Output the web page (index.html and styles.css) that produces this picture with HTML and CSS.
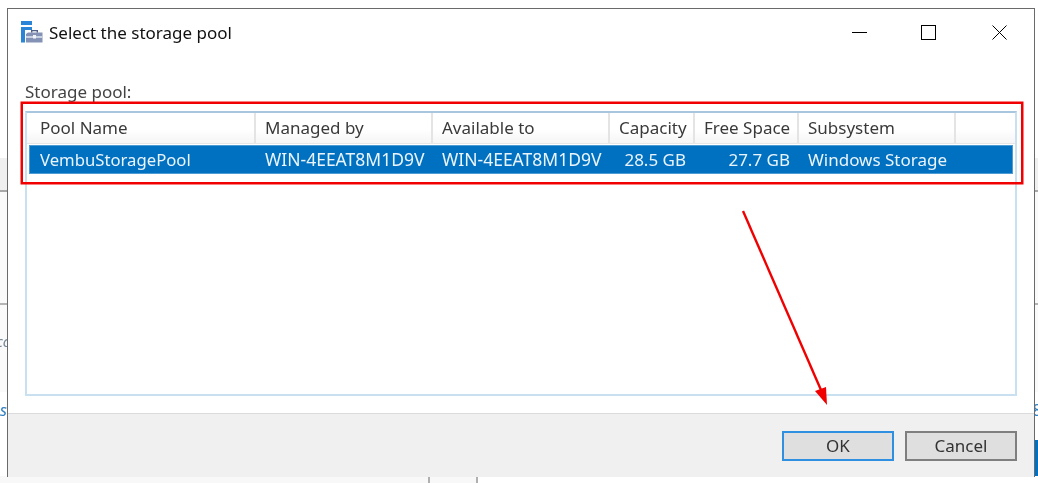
FILE: index.html
```html
<!DOCTYPE html>
<html lang="en">
<head>
<meta charset="utf-8">
<title>Select the storage pool</title>
<link rel="stylesheet" href="styles.css">
</head>
<body>
<div class="desktop">
  <div class="backdrop">
    <div class="bd-top"></div>
    <div class="bd-band"></div>
    <div class="bd-panel"></div>
    <div class="bd-panel bd-tall"><span class="bd-text">cc</span></div>
    <div class="bd-links"><span class="bd-link bd-link-left">s</span><span class="bd-link">8</span></div>
    <div class="bd-fill"><span class="bd-blue"></span></div>
    <div class="bd-foot"><span class="bd-cell bd-cell-a"></span><span class="bd-cell bd-cell-b"></span></div>
  </div>

  <section class="dialog">
    <header class="titlebar">
      <svg class="app-icon" width="22" height="22" viewBox="0 0 22 22" aria-hidden="true">
        <rect x="0" y="0" width="11" height="4" fill="#2b85d6"/>
        <rect x="0" y="6" width="4" height="15.500" fill="#2b85d6"/>
        <rect x="4" y="6" width="7" height="3" fill="#2b85d6"/>
        <path d="M7 11.500h14.500v10H5v-8.500z" fill="#8493b5"/>
        <rect x="5" y="15" width="16.500" height="2" fill="#c9d2e2"/>
        <path d="M10 11.500V9h7v2.500h-1.400v-1.200h-4.200v1.200z" fill="#4f5f85"/>
        <rect x="12" y="14" width="3" height="3.500" fill="#f0f3f8"/>
      </svg>
      <h1 class="title">Select the storage pool</h1>
      <div class="controls">
        <svg class="ctl" width="15" height="15" viewBox="0 0 15 15" aria-hidden="true"><path d="M0 7.500h15" stroke="#000" fill="none"/></svg>
        <svg class="ctl" width="15" height="15" viewBox="0 0 15 15" aria-hidden="true"><rect x=".5" y=".5" width="14" height="14" stroke="#000" fill="none"/></svg>
        <svg class="ctl ctl-close" width="15" height="15" viewBox="0 0 15 15" aria-hidden="true"><path d="M.5.500l14 14M14.500.500l-14 14" stroke="#000" fill="none"/></svg>
      </div>
    </header>

    <main class="content">
      <div class="label">Storage pool:</div>
      <div class="list">
        <div class="list-head">
          <div class="hcell first">Pool Name</div>
          <div class="hcell">Managed by</div>
          <div class="hcell">Available to</div>
          <div class="hcell">Capacity</div>
          <div class="hcell">Free Space</div>
          <div class="hcell">Subsystem</div>
          <div class="hcell"></div>
        </div>
        <div class="list-row">
          <div class="rcell first">VembuStoragePool</div>
          <div class="rcell host">WIN-4EEAT8M1D9V</div>
          <div class="rcell host">WIN-4EEAT8M1D9V</div>
          <div class="rcell num">28.5 GB</div>
          <div class="rcell num">27.7 GB</div>
          <div class="rcell">Windows Storage</div>
          <div class="rcell"></div>
        </div>
      </div>
    </main>

    <footer class="actions">
      <button class="btn btn-default" type="button">OK</button>
      <button class="btn" type="button">Cancel</button>
    </footer>
  </section>

  <div class="highlight"></div>
  <svg class="arrow" width="1038" height="483" viewBox="0 0 1038 483" aria-hidden="true">
    <path d="M743 211L821 390" stroke="#f00000" stroke-width="2.400" fill="none"/>
    <path d="M827 405L815 391L826 387z" fill="#f00000"/>
  </svg>
</div>
</body>
</html>
```

FILE: styles.css
```css
* { box-sizing: border-box; }
html, body { margin: 0; padding: 0; background: #fff; }
body { font-family: "Noto Sans", "Open Sans", sans-serif; font-size: 17px; color: #333; }

.desktop { position: relative; width: 1038px; height: 483px; overflow: hidden; background: #fff; filter: blur(.35px); }

/* application behind the dialog */
.backdrop { display: flex; flex-direction: column; height: 483px; }
.bd-top { height: 158px; }
.bd-band { height: 34px; background: #f0f0f0; border-bottom: 2px solid #a8a8a8; }
.bd-panel { height: 113px; background: #fafafa; border-bottom: 2px solid #b4b4b4; }
.bd-tall { height: 87px; border-bottom: 0; padding-top: 26px; }
.bd-text { display: block; margin-left: -4px; font-size: 15px; line-height: 20px; font-style: italic; color: #7a8a9a; }
.bd-links { display: flex; justify-content: space-between; height: 48px; padding-top: 8px; font-size: 16px; line-height: 20px; color: #2f7fc0; }
.bd-link { margin-right: -4px; }
.bd-link-left { margin-right: 0; font-style: italic; }
.bd-fill { display: flex; justify-content: flex-end; flex: 1; min-height: 0; }
.bd-blue { width: 4px; background: #0070c0; }
.bd-foot { display: flex; height: 7px; background: #fff; }
.bd-cell { background: #f8f8f8; border-right: 2px solid #b0b0b0; }
.bd-cell-a { width: 430px; }
.bd-cell-b { width: 48px; }

/* dialog window */
.dialog {
  position: absolute;
  left: 7px; top: 8px;
  width: 1028px; height: 469px;
  display: flex; flex-direction: column;
  background: #fff;
  border: solid #6a6a6a;
  border-width: 1px 1px 0 1px;
}
.titlebar { display: flex; align-items: center; height: 46px; padding: 0 27px 0 13px; flex: none; }
.app-icon { flex: none; }
.title { margin: 0 0 0 6px; font-size: 17px; font-weight: 400; color: #111; white-space: nowrap; }
.controls { display: flex; align-items: center; gap: 54px; margin-left: auto; margin-top: 1px; }
.ctl { display: block; }
.ctl-close { margin-left: 2px; }

.content { flex: 1; min-height: 0; display: flex; flex-direction: column; padding: 26px 17px 17px; }
.label { height: 30px; font-size: 17px; line-height: 21px; color: #444; flex: none; }
.list { flex: 1; min-height: 0; border: 2px solid #c9e0f0; border-top-color: #a8c6de; }

.list-head, .list-row {
  display: grid;
  grid-template-columns: 229px 177px 177px 85px 104px 157px 1fr;
}
.list-head { height: 31px; border-bottom: 1px solid #e6e6e6; }
.hcell {
  padding-left: 9px;
  font-size: 17px; line-height: 29px;
  color: #3a3a3a;
  background: linear-gradient(#fff 55%, #f5f5f5);
  border-right: 2px solid #e4e4e4;
  white-space: nowrap;
}
.hcell.first { padding-left: 13px; }
.hcell:last-child { border-right: 0; }

.list-row {
  grid-template-columns: 226px 177px 177px 85px 104px 157px 1fr;
  height: 29px;
  margin: 1px 2px 0;
  background: #0070c0;
  box-shadow: 0 0 0 1px #4d9bd4 inset;
}
.rcell { padding-left: 10px; font-size: 17px; line-height: 29px; color: #eaf4fc; white-space: nowrap; }
.rcell.first { padding-left: 11px; font-size: 16.700px; }
.rcell.host { font-size: 17.500px; }
.rcell.num { padding: 0 8px 0 0; text-align: right; }

.actions {
  flex: none;
  display: flex; justify-content: flex-end; gap: 11px;
  height: 64px;
  padding: 17px 17px 0 0;
  background: #f0f0f0;
  border-top: 1px solid #dcdcdc;
}
.btn {
  width: 112px; height: 30px; padding: 0;
  font: inherit; line-height: 26px; color: #333;
  background: #dfdfdf;
  border: 2px solid #7f7f7f;
}
.btn-default { border-color: #2f8fe0; }

/* annotations */
.highlight { position: absolute; left: 21px; top: 102px; width: 1002px; height: 82px; border: 2px solid #f00000; box-shadow: 0 0 0 .5px #f00000; pointer-events: none; }
.arrow { position: absolute; left: 0; top: 0; pointer-events: none; }
```
